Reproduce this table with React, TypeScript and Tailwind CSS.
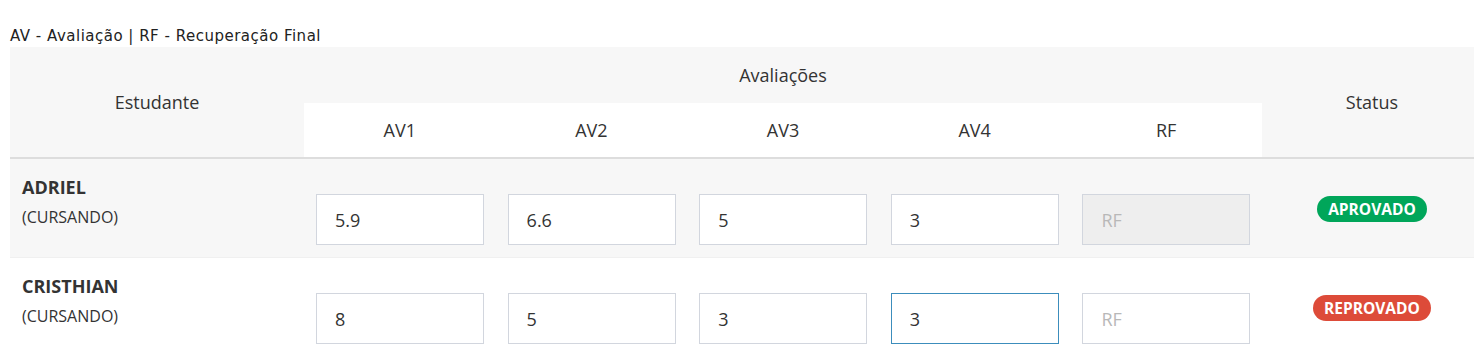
import { useState } from 'react';

interface Student {
  name: string;
  situation: string;
  grades: string[];
  rfDisabled: boolean;
  approved: boolean;
}

const students: Student[] = [
  { name: 'ADRIEL', situation: '(CURSANDO)', grades: ['5.9', '6.6', '5', '3'], rfDisabled: true, approved: true },
  { name: 'CRISTHIAN', situation: '(CURSANDO)', grades: ['8', '5', '3', '3'], rfDisabled: false, approved: false },
];

const cols = 'grid grid-cols-[294px_191.6px_191.6px_191.6px_191.6px_191.6px_220px]';

function GradeInput({ value, focused }: { value: string; focused?: boolean }) {
  const [v, setV] = useState(value);
  return (
    <input
      value={v}
      onChange={(e) => setV(e.target.value)}
      className={`block h-[51px] w-[168px] border bg-white pl-[18px] text-[18px] text-[#333] outline-none ${
        focused ? 'border-[#3c8dbc]' : 'border-[#d2d6de]'
      }`}
    />
  );
}

function StudentRow({ student, striped }: { student: Student; striped: boolean }) {
  return (
    <div className={`${cols} h-[99px] border-b border-[#f0f0f0] ${striped ? 'bg-[#f7f7f7]' : 'bg-white'}`}>
      <div className="pl-3 pt-[16px]">
        <div className="text-[18px] font-bold leading-[24px] text-[#333]">{student.name}</div>
        <div className="mt-[7px] text-[16px] leading-[22px] text-[#333]">{student.situation}</div>
      </div>
      {student.grades.map((g, i) => (
        <div key={i} className="px-3 pt-[35px]">
          <GradeInput value={g} focused={!student.approved && i === 3} />
        </div>
      ))}
      <div className="px-3 pt-[35px]">
        <input
          placeholder="RF"
          disabled={student.rfDisabled}
          className={`block h-[51px] w-[168px] border border-[#d2d6de] pl-[18px] text-[18px] outline-none placeholder:text-[#b8b8b8] ${
            student.rfDisabled ? 'bg-[#eeeeee]' : 'bg-white'
          }`}
        />
      </div>
      <div className="flex justify-center pt-[37px]">
        <span
          className={`h-[26px] rounded-full px-[11px] text-[15.5px] font-bold leading-[26px] text-white ${
            student.approved ? 'bg-[#00a65a]' : 'bg-[#dd4b39]'
          }`}
        >
          {student.approved ? 'APROVADO' : 'REPROVADO'}
        </span>
      </div>
    </div>
  );
}

export default function App() {
  return (
    <div className="h-[351px] w-[1474px] overflow-hidden bg-white font-['Open_Sans',sans-serif] text-[#333]">
      <div className="pl-[10px] pt-[26px]">
        <p className="mb-px font-['DejaVu_Sans',sans-serif] text-[15px] leading-5 tracking-[0.5px] text-[#222]">
          AV - Avaliação | RF - Recuperação Final
        </p>

        <div className="w-[1472px]">
          <div className={`${cols} grid-rows-[56px_54px] border-b-2 border-[#dddddd] bg-[#f7f7f7] text-[18px]`}>
            <div className="row-span-2 flex items-center justify-center">Estudante</div>
            <div className="col-span-5 flex items-center justify-center">Avaliações</div>
            <div className="row-span-2 flex items-center justify-center">Status</div>
            {['AV1', 'AV2', 'AV3', 'AV4', 'RF'].map((h) => (
              <div key={h} className="flex items-center justify-center bg-white">
                {h}
              </div>
            ))}
          </div>

          {students.map((s, i) => (
            <StudentRow key={s.name} student={s} striped={i === 0} />
          ))}
        </div>
      </div>
    </div>
  );
}
